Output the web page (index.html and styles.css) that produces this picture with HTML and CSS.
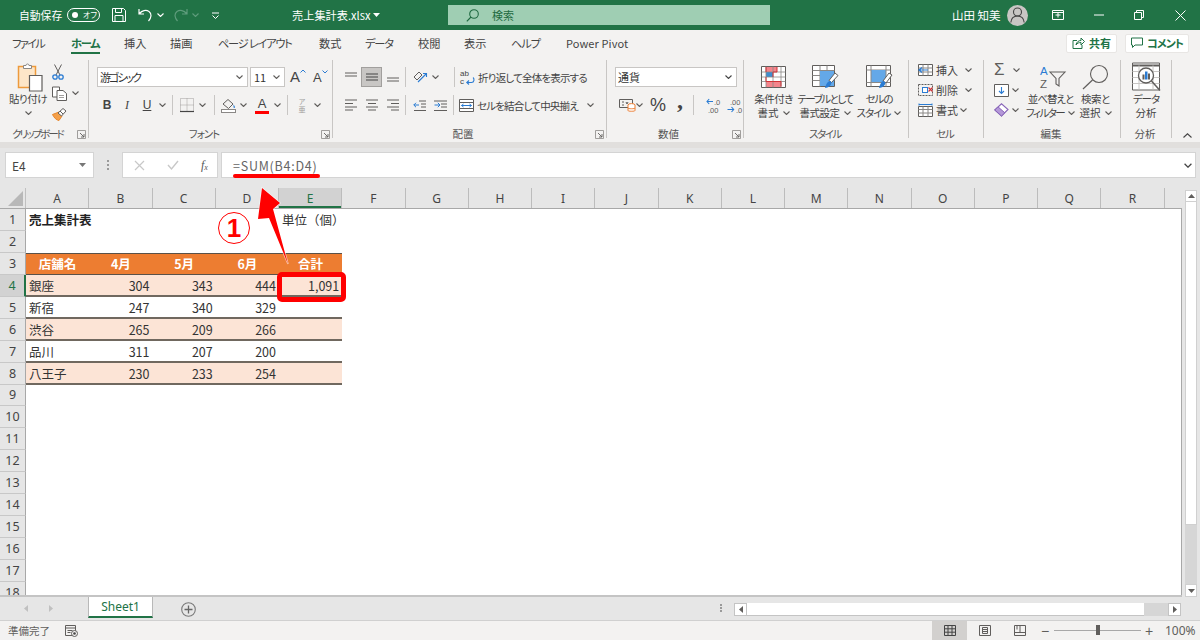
FILE: index.html
```html
<!DOCTYPE html>
<html lang="ja">
<head>
<meta charset="utf-8">
<title>売上集計表.xlsx</title>
<link rel="stylesheet" href="styles.css">
</head>
<body>
<svg class="defs" width="0" height="0">
  <symbol id="chev" viewBox="0 0 7 4"><path d="M.5.5 3.5 3.5 6.5.5" fill="none" stroke="currentColor" stroke-width="1.1"/></symbol>
  <symbol id="launch" viewBox="0 0 9 9"><path d="M.5 8.5V.5h8v8z" fill="none" stroke="#8a8886" stroke-width=".8"/><path d="M3 3l4 4M7 4v3H4" fill="none" stroke="#605e5c" stroke-width=".9"/></symbol>
</svg>
<div class="app">
  <header class="titlebar">
    <div class="tb-left">
      <span class="autosave">自動保存</span>
      <span class="toggle"><i class="dot"></i><b>オフ</b></span>
      <svg class="qat-save" width="14" height="14" viewBox="0 0 14 14"><path d="M.5.5h11l2 2v11H.5z M3.500.5v4h6v-4M3 13.500v-6h8v6" fill="none" stroke="#fff"/></svg>
      <svg class="qat-undo" width="15" height="14" viewBox="0 0 15 14"><path d="M1 1v5h5M1.500 5.500C4 2.500 8 1.500 11 3.500c3 2.200 2.500 6-.5 9.500" fill="none" stroke="#fff" stroke-width="1.200"/></svg>
      <svg class="chev chev-w qat-c1"><use href="#chev"/></svg>
      <svg class="qat-redo" width="15" height="14" viewBox="0 0 15 14"><path d="M14 1v5H9M13.500 5.500C11 2.500 7 1.500 4 3.500c-3 2.200-2.500 6 .5 9.500" fill="none" stroke="#5f9c7c" stroke-width="1.200"/></svg>
      <svg class="chev chev-dim qat-c2"><use href="#chev"/></svg>
      <svg class="qat-more" width="7" height="7" viewBox="0 0 7 7"><path d="M0 1h7M.5 3.500 3.500 6.500 6.500 3.500" fill="none" stroke="#fff"/></svg>
      <span class="doc-name">売上集計表.xlsx</span>
      <svg class="doc-caret" width="7" height="4" viewBox="0 0 7 4"><path d="M0 0h7L3.500 4z" fill="#fff"/></svg>
    </div>
    <div class="search">
      <svg width="13" height="13" viewBox="0 0 13 13"><circle cx="8" cy="5" r="4.300" fill="none" stroke="#1f6a41" stroke-width="1.100"/><path d="M5 8 .8 12.300" stroke="#1f6a41" stroke-width="1.100"/></svg>
      <span>検索</span>
    </div>
    <div class="tb-right">
      <span class="user">山田 知美</span>
      <span class="avatar"><svg width="15" height="16" viewBox="0 0 15 16"><circle cx="7.500" cy="5" r="4" fill="none" stroke="#444" stroke-width="1.100"/><path d="M.8 15.500c.4-4 3-6.500 6.700-6.500s6.300 2.500 6.700 6.500" fill="none" stroke="#444" stroke-width="1.100"/></svg></span>
      <svg class="win w-disp" width="12" height="10" viewBox="0 0 12 10"><path d="M.5.500h11v9H.5zM.5 2.500h11M3.500 5h5M6 2.500V7.500" fill="none" stroke="#fff"/></svg>
      <svg class="win w-min" width="10" height="2" viewBox="0 0 10 2"><path d="M0 1h10" stroke="#fff"/></svg>
      <svg class="win w-max" width="10" height="10" viewBox="0 0 10 10"><path d="M.5 2.500h7v7h-7zM2.500 2.500v-2h7v7h-2" fill="none" stroke="#fff"/></svg>
      <svg class="win w-close" width="11" height="11" viewBox="0 0 11 11"><path d="M.5.500l10 10M10.500.500l-10 10" stroke="#fff"/></svg>
    </div>
  </header>

  <nav class="tabs">
    <span class="tab t-file">ファイル</span>
    <span class="tab t-home active">ホーム</span>
    <span class="tab t-ins">挿入</span>
    <span class="tab t-draw">描画</span>
    <span class="tab t-page">ページ レイアウト</span>
    <span class="tab t-form">数式</span>
    <span class="tab t-data">データ</span>
    <span class="tab t-rev">校閲</span>
    <span class="tab t-view">表示</span>
    <span class="tab t-help">ヘルプ</span>
    <span class="tab t-pp">Power Pivot</span>
    <span class="tab-actions">
      <span class="pill pill-share"><svg width="13" height="12" viewBox="0 0 13 12"><path d="M5 3.500H1v8h9V8M4 8c.5-3 2.500-4.500 5-4.500V1l3.500 3.500L9 8V5.500C7 5.500 5 6 4 8z" fill="none" stroke="#217346"/></svg>共有</span>
      <span class="pill pill-comment"><svg width="12" height="12" viewBox="0 0 12 12"><path d="M.5 1h11v7H4L1.500 10.500V8h-1z" fill="none" stroke="#217346"/></svg><span class="k1">コメント</span></span>
    </span>
  </nav>

  <section class="ribbon">
    <div class="group g-clip">
      <div class="gbody clip-body">
        <div class="big paste">
          <svg class="big-ico" width="26" height="30" viewBox="0 0 26 30"><path d="M1.500 4.500h17v21h-17z" fill="#fde6c8" stroke="#ed9a3c" stroke-width="1.500"/><path d="M6.500 6.500v-3h2.500a1.500 1.500 0 0 1 3 0h2.500v3z" fill="#fff" stroke="#8a8886"/><path d="M12.500 13.500h12.500v15.500H12.500z" fill="#fff" stroke="#605e5c" stroke-width="1.200"/></svg>
          <span class="blabel k05">貼り付け</span>
          <svg class="chev chev-d"><use href="#chev"/></svg>
        </div>
        <div class="clip-tools">
          <div class="r clip-r"><svg width="12" height="16" viewBox="0 0 12 16"><path d="M2.500 .5 8 11M9.500 .5 4 11" stroke="#605e5c" fill="none"/><circle cx="3" cy="13" r="2.200" fill="none" stroke="#2b7cd3" stroke-width="1.300"/><circle cx="9" cy="13" r="2.200" fill="none" stroke="#2b7cd3" stroke-width="1.300"/></svg></div>
          <div class="r clip-r"><svg width="16" height="15" viewBox="0 0 16 15"><path d="M.5 1h7v10h-7z" fill="#fff" stroke="#605e5c"/><path d="M5 4.500h6l3.500 3v7H5z" fill="#fff" stroke="#605e5c"/><path d="M7 9.500h5M7 11.500h5" stroke="#a19f9d"/></svg><svg class="chev chev-d copy-c"><use href="#chev"/></svg></div>
          <div class="r clip-r"><svg width="15" height="14" viewBox="0 0 15 14"><path d="M.5 7.500 7 5l3 4-3 4.500C4 13 2 10.500.5 7.500z" fill="#f4a04a" stroke="#e8862a"/><path d="M6 6 11 1.500l3 2.500-4.500 5z" fill="#fff" stroke="#605e5c"/><path d="M8 4l3 3" stroke="#605e5c"/></svg></div>
        </div>
      </div>
      <div class="glabel"><span class="k2">クリップボード</span><svg class="launcher"><use href="#launch"/></svg></div>
    </div>

    <div class="group g-font">
      <div class="gbody stack">
        <div class="r">
          <span class="select sel-font"><span class="k2">游ゴシック</span><svg class="chev chev-d"><use href="#chev"/></svg></span>
          <span class="select sel-size"><span>11</span><svg class="chev chev-d"><use href="#chev"/></svg></span>
          <span class="grow-a">A<svg width="6" height="4" viewBox="0 0 6 4"><path d="M.5 3.500 3 1l2.500 2.500" fill="none" stroke="#2b7cd3"/></svg></span>
          <span class="shrink-a">A<svg width="6" height="4" viewBox="0 0 6 4"><path d="M.5.500 3 3 5.500.500" fill="none" stroke="#2b7cd3"/></svg></span>
        </div>
        <div class="r">
          <span class="s20 t-b">B</span><span class="s20 t-i">I</span><span class="s20 t-u">U</span><span class="s10 cc"><svg class="chev chev-d"><use href="#chev"/></svg></span>
          <i class="sep sep-a"></i>
          <span class="s20"><svg width="14" height="14" viewBox="0 0 14 14"><path d="M.5.500h13v13H.5z" fill="none" stroke="#a19f9d" stroke-dasharray="1 1"/><path d="M7 .5v13M.5 7h13" stroke="#a19f9d" stroke-dasharray="1 1"/><path d="M0 13.500h14" stroke="#444" stroke-width="1.200"/></svg></span><span class="s10 cc"><svg class="chev chev-d"><use href="#chev"/></svg></span>
          <i class="sep sep-b"></i>
          <span class="s20"><svg width="15" height="15" viewBox="0 0 15 15"><path d="M2 6 7 1.500 12 6 7.500 10.500z" fill="none" stroke="#605e5c"/><path d="M12.500 6.500s1.500 1.800 1.500 2.800-1.500 1-1.500 0z" fill="#2b7cd3"/><rect x=".5" y="11.500" width="14" height="3" fill="#fff" stroke="#8a8886"/></svg></span><span class="s10 cc"><svg class="chev chev-d"><use href="#chev"/></svg></span>
          <span class="s20 t-color">A</span><span class="s10 cc"><svg class="chev chev-d"><use href="#chev"/></svg></span>
          <i class="sep sep-a"></i>
          <span class="s20 t-ph"><b>ア</b><b>亜</b></span><span class="s10 cc"><svg class="chev chev-d"><use href="#chev"/></svg></span>
        </div>
      </div>
      <div class="glabel"><span class="k1">フォント</span><svg class="launcher"><use href="#launch"/></svg></div>
    </div>

    <div class="group g-align">
      <div class="gbody stack">
        <div class="r">
          <span class="s21"><svg width="12" height="12" viewBox="0 0 12 12"><path d="M0 2h12M0 5h12" stroke="#605e5c"/></svg></span>
          <span class="s21 on"><svg width="12" height="12" viewBox="0 0 12 12"><path d="M0 3h12M0 6h12M0 9h12" stroke="#444"/></svg></span>
          <span class="s21"><svg width="12" height="12" viewBox="0 0 12 12"><path d="M0 7h12M0 10h12" stroke="#605e5c"/></svg></span>
          <i class="sep sep-c"></i>
          <span class="s20"><svg width="15" height="13" viewBox="0 0 15 13"><path d="M1 6l5-5 3 3-5 5z" fill="none" stroke="#605e5c"/><path d="M5 11 13 3M10 2.500h3.500V6" fill="none" stroke="#2b7cd3" stroke-width="1.100"/></svg></span>
          <span class="s10 cc"><svg class="chev chev-d"><use href="#chev"/></svg></span>
          <i class="sep sep-d"></i>
          <svg class="wide-ico" width="15" height="17" viewBox="0 0 15 17"><text x="0" y="7" class="ico-t">ab</text><text x="0" y="15" class="ico-t">c</text><path d="M13 8.500c1.500 1 1.500 5-1.500 5H7M9 11.500l-2.200 2 2.200 2" fill="none" stroke="#2b7cd3" stroke-width="1.100"/></svg>
          <span class="rt">折り返して全体を表示する</span>
        </div>
        <div class="r">
          <span class="s21"><svg width="12" height="12" viewBox="0 0 12 12"><path d="M0 1h12M0 4.500h8M0 8h12M0 11h8" stroke="#605e5c"/></svg></span>
          <span class="s21"><svg width="12" height="12" viewBox="0 0 12 12"><path d="M0 1h12M2 4.500h8M0 8h12M2 11h8" stroke="#605e5c"/></svg></span>
          <span class="s21"><svg width="12" height="12" viewBox="0 0 12 12"><path d="M0 1h12M4 4.500h8M0 8h12M4 11h8" stroke="#605e5c"/></svg></span>
          <i class="sep sep-c"></i>
          <span class="s20 ind"><svg width="13" height="11" viewBox="0 0 13 11"><path d="M6 1h7M8 4h5M8 7h5M1 10.500h12" stroke="#605e5c" fill="none"/><path d="M6 5H.8M3 2.800.8 5 3 7.200" stroke="#2b7cd3" fill="none"/></svg></span>
          <span class="s20 ind2"><svg width="13" height="11" viewBox="0 0 13 11"><path d="M0 1h13M7 4h6M7 7h6M0 10.500h13" stroke="#605e5c" fill="none"/><path d="M.5 5h5.500M3.800 2.800 6 5 3.800 7.200" stroke="#2b7cd3" fill="none"/></svg></span>
          <i class="sep sep-e"></i>
          <svg class="wide-ico" width="15" height="13" viewBox="0 0 15 13"><path d="M.5.500h14v12H.5z" fill="#fff" stroke="#605e5c"/><path d="M.5 3.500h14M.5 9.500h14" stroke="#605e5c"/><path d="M2.500 6.500h10M4.500 5 2.500 6.500 4.500 8M10.500 5l2 1.500L10.500 8" fill="none" stroke="#2b7cd3"/></svg>
          <span class="rt merge-t">セルを結合して中央揃え</span>
          <svg class="chev chev-d merge-c"><use href="#chev"/></svg>
        </div>
      </div>
      <div class="glabel"><span>配置</span><svg class="launcher"><use href="#launch"/></svg></div>
    </div>

    <div class="group g-num">
      <div class="gbody stack">
        <div class="r"><span class="select sel-num"><span>通貨</span><svg class="chev chev-k"><use href="#chev"/></svg></span></div>
        <div class="r">
          <span class="s20 num-cur"><svg width="17" height="14" viewBox="0 0 17 14"><path d="M.5 1.500h13v8H.5z" fill="none" stroke="#605e5c"/><path d="M3 4h2M3 7h2M7 4l1 2 1-2" fill="none" stroke="#605e5c"/><ellipse cx="12.500" cy="7" rx="3.500" ry="1.400" fill="#fff" stroke="#ed7d31"/><path d="M9 7v5.500c0 1 7 1 7 0V7M9 10c0 1 7 1 7 0" fill="#fff" stroke="#ed7d31"/></svg></span><span class="s10 cc num-c"><svg class="chev chev-d"><use href="#chev"/></svg></span>
          <span class="s20 t-pct">%</span>
          <span class="s20 t-comma">,</span>
          <i class="sep sep-f"></i>
          <span class="s21"><svg width="16" height="15" viewBox="0 0 16 15"><path d="M7 3.500H1M3.200 1 1 3.500 3.200 6" fill="none" stroke="#2b7cd3" stroke-width="1.100"/><text x="8" y="6.500" class="ico-n">.0</text><text x="2" y="15" class="ico-n">.00</text></svg></span>
          <span class="s21"><svg width="16" height="15" viewBox="0 0 16 15"><text x="3" y="6.500" class="ico-n">.00</text><path d="M.5 11.500h6M4.500 9l2.200 2.500L4.500 14" fill="none" stroke="#2b7cd3" stroke-width="1.100"/><text x="9" y="15" class="ico-n">.0</text></svg></span>
        </div>
      </div>
      <div class="glabel"><span>数値</span><svg class="launcher"><use href="#launch"/></svg></div>
    </div>

    <div class="group g-style">
      <div class="gbody row-body">
        <div class="big st1">
          <svg class="big-ico" width="25" height="22" viewBox="0 0 25 22"><path d="M.5.500h24v21H.5z" fill="#fff" stroke="#605e5c"/><rect x="5" y="1" width="11" height="5" fill="#f4858c"/><rect x="5" y="6" width="7" height="5" fill="#3e8ed0"/><rect x="5" y="15" width="15" height="6" fill="#f4858c"/><path d="M5 .5v21M12 .5v21M20 .5v21M.5 6h24M.5 11h24M.5 15.500h24" stroke="#8a8886" fill="none" stroke-width=".8"/><path d="M5 1v5M16 1v5h-4v5M5 11v4.500h15v5" stroke="#d13438" fill="none"/></svg>
          <span class="blabel k05">条件付き</span>
          <span class="blabel">書式<svg class="chev chev-d inl"><use href="#chev"/></svg></span>
        </div>
        <div class="big st2">
          <svg class="big-ico" width="27" height="24" viewBox="0 0 27 24"><path d="M.5.500h22v21H.5z" fill="#fff" stroke="#605e5c"/><path d="M.5 5.500h22M.5 10.500h22M.5 15.500h22M8 .5v21M15 .5v21" stroke="#8a8886" fill="none"/><rect x="8" y="6" width="14" height="15" fill="#64a8e8"/><path d="M17 15.500 23 8 26 10.500 19.500 17.500z" fill="#fff" stroke="#605e5c"/><path d="M13 23c1-3 2-7 5.500-7l1 1.500c-.5 3.500-3 5-6.500 5.500z" fill="#2b7cd3"/></svg>
          <span class="blabel k15">テーブルとして</span>
          <span class="blabel k05">書式設定<svg class="chev chev-d inl"><use href="#chev"/></svg></span>
        </div>
        <div class="big st3">
          <svg class="big-ico" width="27" height="24" viewBox="0 0 27 24"><path d="M.5.500h24v21H.5z" fill="#fff" stroke="#605e5c"/><path d="M.5 5h24M.5 17.500h24" stroke="#8a8886" fill="none"/><rect x="5" y="5" width="15" height="12" fill="#64a8e8"/><path d="M5 .5v21M20 .5v21" stroke="#8a8886" fill="none"/><path d="M17 16 23 8 26 10 20 18z" fill="#fff" stroke="#605e5c"/><path d="M13 23c1-3 2-7 4.500-7l2 1.500c-.5 3.500-3 5-6.500 5.500z" fill="#2b7cd3"/></svg>
          <span class="blabel k1">セルの</span>
          <span class="blabel k1">スタイル<svg class="chev chev-d inl"><use href="#chev"/></svg></span>
        </div>
      </div>
      <div class="glabel"><span class="k15">スタイル</span></div>
    </div>

    <div class="group g-cells">
      <div class="gbody cells-body">
        <div class="r cr"><svg width="15" height="12" viewBox="0 0 15 12"><path d="M.5.500h14v11H.5z" fill="#fff" stroke="#605e5c"/><path d="M5 .5v11M10 .5v11" stroke="#8a8886"/><path d="M.5 4h14M.5 8h14" stroke="#8a8886"/><path d="M1 6h9M4 3.500 1 6l3 2.500" fill="none" stroke="#2b7cd3" stroke-width="1.200"/></svg><span class="ct">挿入</span><svg class="chev chev-d ccv"><use href="#chev"/></svg></div>
        <div class="r cr"><svg width="15" height="12" viewBox="0 0 15 12"><path d="M.5.500h14v11H.5z" fill="none" stroke="#605e5c" stroke-dasharray="2 1"/><rect x="4.500" y="3.500" width="5" height="5" fill="#fff" stroke="#2b7cd3"/><path d="M10.500 3.500l4 4M14.500 3.500l-4 4" stroke="#d13438" stroke-width="1.100"/></svg><span class="ct">削除</span><svg class="chev chev-d ccv"><use href="#chev"/></svg></div>
        <div class="r cr"><svg width="15" height="14" viewBox="0 0 15 14"><path d="M.5 3.500h14v10H.5z" fill="#fff" stroke="#605e5c"/><path d="M.5 6.500h14M.5 10h14M5 3.500v10M10 3.500v10" stroke="#8a8886"/><path d="M1 1.500h13M1 .5v2M14 .5v2" stroke="#2b7cd3"/></svg><span class="ct">書式</span><svg class="chev chev-d ccv2"><use href="#chev"/></svg></div>
      </div>
      <div class="glabel"><span class="k1">セル</span></div>
    </div>

    <div class="group g-edit">
      <div class="gbody row-body">
        <div class="edit-tools">
          <div class="r er"><span class="t-sigma">Σ</span><svg class="chev chev-d ev"><use href="#chev"/></svg></div>
          <div class="r er"><svg width="15" height="13" viewBox="0 0 15 13"><path d="M.5.500h14v12H.5z" fill="#fff" stroke="#605e5c"/><path d="M7.500 3v6.500M5 7l2.500 2.500L10 7" fill="none" stroke="#2b7cd3" stroke-width="1.100"/></svg><svg class="chev chev-d ev2"><use href="#chev"/></svg></div>
          <div class="r er"><svg width="15" height="14" viewBox="0 0 15 14"><path d="M.8 7 7.500.8 14 6.500 7.500 13z" fill="#fff" stroke="#8764b8" stroke-width="1.100"/><path d="M4 3.800 10.800 9.800 7.500 13 .8 7z" fill="#b498d8" stroke="#8764b8"/></svg><svg class="chev chev-d ev2"><use href="#chev"/></svg></div>
        </div>
        <div class="big ed1">
          <svg class="big-ico" width="28" height="26" viewBox="0 0 28 26"><text x="3" y="10.500" class="ico-az ico-blue">A</text><text x="3" y="24" class="ico-az">Z</text><path d="M13 8h15l-6 6.500v7.500l-3-2v-5.500z" fill="none" stroke="#605e5c" stroke-width="1.100"/></svg>
          <span class="blabel k1">並べ替えと</span>
          <span class="blabel k15">フィルター<svg class="chev chev-d inl"><use href="#chev"/></svg></span>
        </div>
        <div class="big ed2">
          <svg class="big-ico" width="27" height="26" viewBox="0 0 27 26"><circle cx="17" cy="10" r="8.500" fill="none" stroke="#605e5c" stroke-width="1.100"/><path d="M10.500 16 1 25" stroke="#605e5c" stroke-width="1.200"/></svg>
          <span class="blabel k05">検索と</span>
          <span class="blabel">選択<svg class="chev chev-d inl"><use href="#chev"/></svg></span>
        </div>
      </div>
      <div class="glabel"><span>編集</span></div>
    </div>

    <div class="group g-anl">
      <div class="gbody row-body">
        <div class="big an1">
          <svg class="big-ico" width="29" height="29" viewBox="0 0 29 29"><path d="M.5.500h27v27H.5z" fill="#fff" stroke="#605e5c"/><path d="M.5 3h27" stroke="#605e5c" stroke-width="2"/><path d="M7 3v24M21 3v24M.5 9h27M.5 15h27M.5 21h27" stroke="#c8c6c4"/><circle cx="14" cy="13" r="7.500" fill="#fff" stroke="#605e5c" stroke-width="1.300"/><rect x="10.500" y="12" width="2" height="5" fill="#605e5c"/><rect x="13" y="9" width="2.500" height="8" fill="#2b7cd3"/><rect x="16" y="11" width="2" height="6" fill="#605e5c"/><path d="M19.500 18.500 28 28" stroke="#605e5c" stroke-width="1.500"/></svg>
          <span class="blabel k1">データ</span>
          <span class="blabel">分析</span>
        </div>
      </div>
      <div class="glabel"><span>分析</span></div>
    </div>

    <svg class="collapse" width="9" height="5" viewBox="0 0 9 5"><path d="M.5 4.500 4.500.8l4 3.700" fill="none" stroke="#444" stroke-width="1.100"/></svg>
  </section>

  <section class="fbar">
    <div class="namebox"><span>E4</span><svg width="7" height="4" viewBox="0 0 7 4"><path d="M0 0h7L3.500 4z" fill="#777"/></svg></div>
    <div class="fdots"><i></i><i></i><i></i></div>
    <div class="fbtns">
      <svg width="11" height="11" viewBox="0 0 11 11"><path d="M1 1l9 9M10 1l-9 9" stroke="#c8c8c8" stroke-width="1.200"/></svg>
      <svg width="12" height="10" viewBox="0 0 12 10"><path d="M1 5l3.500 4L11 1" fill="none" stroke="#c8c8c8" stroke-width="1.400"/></svg>
      <span class="fx">f<sub>x</sub></span>
    </div>
    <div class="formula"><span>=SUM(B4:D4)</span><svg class="chev chev-k"><use href="#chev"/></svg></div>
  </section>

  <main class="work">
    <div class="sheet">
      <div class="colhead">
        <div class="corner"><svg width="15" height="15" viewBox="0 0 15 15"><path d="M15 0v15H0z" fill="#b8b8b8"/></svg></div>
        <div class="ch">A</div><div class="ch">B</div><div class="ch">C</div><div class="ch">D</div><div class="ch cur">E</div><div class="ch">F</div><div class="ch">G</div><div class="ch">H</div><div class="ch">I</div><div class="ch">J</div><div class="ch">K</div><div class="ch">L</div><div class="ch">M</div><div class="ch">N</div><div class="ch">O</div><div class="ch">P</div><div class="ch">Q</div><div class="ch">R</div>
      </div>
      <div class="rows">
        <div class="row"><div class="rh">1</div><div class="c title">売上集計表</div><div class="c"></div><div class="c"></div><div class="c"></div><div class="c unit">単位（個）</div></div>
        <div class="row"><div class="rh">2</div></div>
        <div class="row head"><div class="rh">3</div><div class="c">店舗名</div><div class="c">4月</div><div class="c">5月</div><div class="c">6月</div><div class="c">合計</div></div>
        <div class="row band sel"><div class="rh cur">4</div><div class="c">銀座</div><div class="c n">304</div><div class="c n">343</div><div class="c n">444</div><div class="c n">1,091</div></div>
        <div class="row line"><div class="rh">5</div><div class="c">新宿</div><div class="c n">247</div><div class="c n">340</div><div class="c n">329</div><div class="c"></div></div>
        <div class="row band"><div class="rh">6</div><div class="c">渋谷</div><div class="c n">265</div><div class="c n">209</div><div class="c n">266</div><div class="c"></div></div>
        <div class="row line"><div class="rh">7</div><div class="c">品川</div><div class="c n">311</div><div class="c n">207</div><div class="c n">200</div><div class="c"></div></div>
        <div class="row band"><div class="rh">8</div><div class="c">八王子</div><div class="c n">230</div><div class="c n">233</div><div class="c n">254</div><div class="c"></div></div>
        <div class="row"><div class="rh">9</div></div>
        <div class="row"><div class="rh">10</div></div>
        <div class="row"><div class="rh">11</div></div>
        <div class="row"><div class="rh">12</div></div>
        <div class="row"><div class="rh">13</div></div>
        <div class="row"><div class="rh">14</div></div>
        <div class="row"><div class="rh">15</div></div>
        <div class="row"><div class="rh">16</div></div>
        <div class="row"><div class="rh">17</div></div>
        <div class="row"><div class="rh">18</div></div>
      </div>
    </div>
    <aside class="vscroll">
      <span class="sbtn"><svg width="7" height="4" viewBox="0 0 7 4"><path d="M3.500 0 7 4H0z" fill="#605e5c"/></svg></span>
      <div class="vtrack"><span class="vthumb"></span></div>
      <span class="sbtn sbtn-end"><svg width="7" height="4" viewBox="0 0 7 4"><path d="M0 0h7L3.500 4z" fill="#605e5c"/></svg></span>
    </aside>
  </main>

  <section class="sheetbar">
    <div class="nav"><svg width="4" height="7" viewBox="0 0 4 7"><path d="M4 0v7L0 3.500z" fill="#c0c0c0"/></svg><svg width="4" height="7" viewBox="0 0 4 7"><path d="M0 0v7l4-3.500z" fill="#c0c0c0"/></svg></div>
    <div class="stab">Sheet1</div>
    <svg class="addsheet" width="15" height="15" viewBox="0 0 15 15"><circle cx="7.500" cy="7.500" r="6.800" fill="none" stroke="#7a7a7a" stroke-width="1.100"/><path d="M7.500 3.500v8M3.500 7.500h8" stroke="#666" stroke-width="1.300"/></svg>
    <div class="splitter"><i></i><i></i><i></i></div>
    <div class="hscroll">
      <span class="hbtn"><svg width="4" height="7" viewBox="0 0 4 7"><path d="M4 0v7L0 3.500z" fill="#605e5c"/></svg></span>
      <span class="hthumb"></span>
      <span class="hbtn"><svg width="4" height="7" viewBox="0 0 4 7"><path d="M0 0v7l4-3.500z" fill="#605e5c"/></svg></span>
    </div>
  </section>

  <footer class="status">
    <span class="ready">準備完了</span>
    <svg class="macro" width="13" height="12" viewBox="0 0 13 12"><path d="M.5.500h10v10H.5zM.5 3h10M2.500 5.500h5M2.500 7.500h3" fill="none" stroke="#605e5c"/><circle cx="9.500" cy="8.500" r="3" fill="#f3f2f1" stroke="#605e5c"/><circle cx="9.500" cy="8.500" r="1.300" fill="#444"/></svg>
    <div class="views">
      <span class="view on"><svg width="12" height="11" viewBox="0 0 12 11"><path d="M.5.500h11v10H.5zM4 .5v10M8 .5v10M.5 3.800h11M.5 7.200h11" fill="none" stroke="#444"/></svg></span>
      <span class="view"><svg width="12" height="11" viewBox="0 0 12 11"><path d="M.5.500h11v10H.5zM3.500 2.500h5v6h-5zM3.500 4.500h5M3.500 6.500h5" fill="none" stroke="#605e5c"/></svg></span>
      <span class="view"><svg width="12" height="11" viewBox="0 0 12 11"><path d="M.5.500h11v10H.5zM.5 7.500h11M6 .5v7M3 .5v4" fill="none" stroke="#605e5c"/></svg></span>
    </div>
    <span class="zsign zminus">−</span>
    <span class="slider"><i></i></span>
    <span class="zsign zplus">+</span>
    <span class="zoompct">100%</span>
  </footer>

  <div class="callouts">
    <i class="formula-mark"></i>
    <svg class="arrow" width="60" height="90" viewBox="250 180 60 90"><path d="M262 188 280 203 273 209 288 264 269 218 258 219z" fill="#ff0000" stroke="#fff" stroke-opacity=".6" stroke-width="1.500" paint-order="stroke"/></svg>
    <span class="step">1</span>
    <i class="cell-mark"></i>
  </div>
</div>
</body>
</html>
```

FILE: styles.css
```css
* { box-sizing: border-box; }
html, body { margin: 0; height: 100%; }
body {
  font-family: "Noto Sans CJK JP", "Noto Sans", sans-serif;
  font-size: 11px;
  color: #444;
  background: #f3f2f1;
  overflow: hidden;
  font-feature-settings: "palt";
}
.defs { position: absolute; }
svg { display: block; flex: none; overflow: visible; }
.app { position: relative; width: 1200px; height: 640px; display: flex; flex-direction: column; overflow: hidden; }
.chev { width: 7px; height: 4px; flex: none; }
.chev-w { color: #fff; }
.chev-dim { color: #5f9c7c; }
.chev-d { color: #605e5c; }
.chev-k { color: #444; }
.k05 { letter-spacing: -.5px; }
.k1 { letter-spacing: -1px; }
.k15 { letter-spacing: -1.500px; }
.k2 { letter-spacing: -2px; }

/* title bar */
.titlebar { height: 30px; flex: none; background: #217346; color: #fff; display: grid; grid-template-columns: 448px 322px 1fr; align-items: center; }
.tb-left { display: flex; align-items: center; padding-left: 19px; font-size: 11.500px; white-space: nowrap; }
.autosave { width: 43px; font-size: 10.800px; }
.toggle { margin-left: 5px; width: 33px; height: 14px; border: 1px solid #fff; border-radius: 7px; display: flex; align-items: center; padding-left: 4px; }
.toggle .dot { width: 6px; height: 6px; border-radius: 50%; background: #fff; }
.toggle b { font-weight: 400; font-size: 8px; margin-left: 5px; line-height: 12px; }
.qat-save { margin-left: 12px; }
.qat-undo { margin-left: 12px; }
.qat-c1 { margin-left: 4px; }
.qat-redo { margin-left: 9px; }
.qat-c2 { margin-left: 4px; }
.qat-more { margin-left: 13px; }
.doc-name { margin-left: 73px; width: 78px; white-space: nowrap; font-size: 11.200px; }
.doc-caret { margin-left: 3px; }
.search { height: 20px; background: #9fceb3; display: flex; align-items: center; padding-left: 18px; color: #1f6a41; font-size: 11px; }
.search span { margin-left: 13px; }
.tb-right { display: flex; align-items: center; padding-left: 182px; font-size: 11.500px; }
.user { width: 46px; white-space: nowrap; }
.avatar { margin-left: 9px; width: 21px; height: 21px; border-radius: 50%; background: #c8c6c4; display: flex; align-items: center; justify-content: center; }
.w-disp { margin-left: 24px; }
.w-min { margin-left: 30px; }
.w-max { margin-left: 30px; }
.w-close { margin-left: 31px; }

/* tabs */
.tabs { height: 26px; flex: none; display: flex; align-items: center; padding-left: 12px; font-size: 11.200px; color: #444; }
.tab { position: relative; white-space: nowrap; line-height: 18px; flex: none; }
.tab.active { font-weight: 700; color: #217346; }
.tab.active::after { content: ""; position: absolute; left: 0; right: 0; bottom: -2px; height: 2px; background: #217346; }
.t-file { width: 33px; letter-spacing: -1.700px; }
.t-home { width: 29px; margin-left: 26px; letter-spacing: -1.200px; }
.t-ins { width: 22px; margin-left: 24px; }
.t-draw { width: 22px; margin-left: 24px; }
.t-page { width: 75px; margin-left: 26px; letter-spacing: -1.200px; }
.t-form { width: 23px; margin-left: 26px; }
.t-data { width: 29px; margin-left: 23px; letter-spacing: -1.100px; }
.t-rev { width: 22px; margin-left: 24px; }
.t-view { width: 23px; margin-left: 24px; }
.t-help { width: 28px; margin-left: 24px; letter-spacing: -1.100px; }
.t-pp { width: 66px; margin-left: 27px; font-size: 11px; letter-spacing: .1px; }
.tab-actions { margin-left: auto; display: flex; gap: 8px; padding-right: 11px; }
.pill { height: 19px; background: #fff; border: 1px solid #e8e6e4; border-radius: 2px; display: flex; align-items: center; justify-content: center; gap: 4px; color: #217346; font-weight: 700; font-size: 11px; }
.pill-share { width: 51px; }
.pill-comment { width: 64px; }

/* ribbon */
.ribbon { position: relative; height: 92px; flex: none; display: flex; padding-top: 4px; border-bottom: 6px solid #e1dfdd; }
.group { height: 78px; border-right: 1px solid #c8c6c4; display: flex; flex-direction: column; flex: none; }
.gbody { flex: 1; min-height: 0; }
.glabel { height: 14px; line-height: 14px; margin-bottom: -3px; display: flex; align-items: center; padding-right: 2px; font-size: 10.500px; color: #555; }
.glabel span { flex: 1; text-align: center; white-space: nowrap; }
.launcher { width: 9px; height: 9px; margin-left: 2px; }
.g-clip { width: 89px; }
.g-font { width: 244px; }
.g-align { width: 274px; }
.g-num { width: 137px; }
.g-style { width: 165px; }
.g-cells { width: 75px; }
.g-edit { width: 137px; }
.g-anl { width: 51px; }
.r { display: flex; align-items: center; height: 20px; }
.stack { display: flex; flex-direction: column; gap: 8px; padding-top: 7px; }
.g-font .stack { padding-left: 8px; }
.g-align .stack { padding-left: 7px; }
.g-num .stack { padding-left: 8px; }
.select { height: 20px; background: #fff; border: 1px solid #c8c6c4; display: flex; align-items: center; justify-content: space-between; padding: 0 4px 0 2px; font-size: 11px; color: #333; white-space: nowrap; }
.sel-font { width: 151px; }
.sel-size { width: 35px; margin-left: 2px; padding-left: 3px; }
.sel-num { width: 122px; font-size: 11px; }
.grow-a, .shrink-a { display: flex; align-items: flex-start; font-family: "Liberation Sans", sans-serif; line-height: 16px; color: #444; }
.grow-a { font-size: 15px; margin-left: 5px; width: 22px; }
.shrink-a { font-size: 13px; margin-left: 1px; padding-top: 1px; }
.s20, .s21, .s10 { display: flex; align-items: center; justify-content: center; flex: none; height: 20px; }
.s20 { width: 20px; }
.s21 { width: 21px; }
.s10 { width: 10px; }
.s21.on { background: #c8c6c4; border: 1px solid #a19f9d; }
.t-b { font: 700 12px "Liberation Sans", sans-serif; color: #444; }
.t-i { font: italic 12px "Liberation Serif", serif; color: #444; }
.t-u { font: 12px "Liberation Sans", sans-serif; text-decoration: underline; color: #444; }
.t-color { font: 13px/14px "Liberation Sans", sans-serif; color: #444; flex-direction: column; margin-left: 4px; }
.t-color::after { content: ""; width: 14px; height: 3px; background: #f00; }
.t-ph { flex-direction: column; color: #a19f9d; font-size: 7px; line-height: 8px; }
.t-ph b { font-weight: 400; }
.sep { display: block; width: 1px; height: 20px; background: #c8c6c4; flex: none; }
.sep-a { margin: 0 4px 0 5px; }
.sep-b { margin: 0 3px 0 7px; }
.sep-c { margin: 0 4px 0 2px; }
.sep-d { margin: 0 5px 0 14px; }
.sep-e { margin: 0 5px 0 3px; }
.sep-f { margin: 0 9px 0 3px; }
.ind { margin-left: -1px; }
.ind2 { margin-left: 1px; }
.wide-ico { width: 15px; }
.rt { margin-left: 3px; font-size: 10.500px; letter-spacing: -.8px; white-space: nowrap; color: #444; }
.merge-t { width: 102px; }
.merge-c { margin-left: 8px; }
.ico-t { font: 8px "Liberation Sans", sans-serif; fill: #444; }
.ico-n { font: 7.500px "Liberation Sans", sans-serif; fill: #605e5c; }
.ico-az { font: 11.500px "Liberation Sans", sans-serif; fill: #605e5c; }
.ico-blue { fill: #2b7cd3; }
.num-cur { margin-left: 2px; }
.num-c { margin-left: -3px; margin-right: 4px; }
.t-pct { font: 18px "Liberation Sans", sans-serif; color: #444; }
.t-comma { font: 700 24px/14px "Liberation Serif", serif; color: #444; padding-bottom: 10px; margin-left: 2px; }
.clip-body { display: flex; padding-top: 2px; padding-left: 8px; }
.row-body { display: flex; padding-top: 2px; }
.big { display: flex; flex-direction: column; align-items: center; flex: none; }
.big-ico { height: 30px; }
.blabel { height: 14px; line-height: 14px; font-size: 10.500px; white-space: nowrap; display: flex; align-items: center; color: #444; }
.paste { width: 40px; }
.paste .chev { margin-top: 5px; }
.paste .big-ico { margin-left: 4px; }
.clip-tools { display: flex; flex-direction: column; gap: 1px; margin-left: 2px; }
.clip-r { width: 32px; height: 20px; padding-left: 2px; justify-content: flex-start; }
.copy-c { margin-left: 4px; }
.inl { margin-left: 4px; }
.g-style .row-body { padding-left: 6px; }
.st1 { width: 47px; }
.st2 { width: 56px; }
.st3 { width: 52px; }
.cells-body { padding-left: 9px; }
.cr { height: 20px; }
.ct { margin-left: 3px; font-size: 11px; width: 24px; white-space: nowrap; }
.ccv { margin-left: 5px; }
.ccv2 { margin-left: 0; }
.g-edit .row-body { padding-left: 10px; padding-top: 0; }
.edit-tools { width: 34px; display: flex; flex-direction: column; }
.er { height: 20px; }
.t-sigma { font: 17px "Liberation Sans", sans-serif; color: #605e5c; width: 15px; }
.ev { margin-left: 4px; }
.ev2 { margin-left: 3px; }
.ed1 { width: 45px; padding-top: 2px; }
.ed2 { width: 45px; padding-top: 2px; }
.g-anl .row-body { justify-content: center; }
.collapse { position: absolute; right: 8px; top: 77px; }

/* formula bar */
.fbar { height: 38px; flex: none; background: #e6e6e6; display: flex; align-items: flex-start; padding: 4px 4px 0 5px; }
.namebox { width: 89px; height: 26px; background: #fff; border: 1px solid #d4d4d4; display: flex; align-items: center; justify-content: space-between; padding: 0 7px 0 6px; font-size: 12px; color: #444; }
.fdots { width: 28px; height: 26px; display: flex; flex-direction: column; align-items: center; justify-content: center; gap: 2px; }
.fdots i { width: 2px; height: 2px; background: #9a9a9a; }
.fbtns { width: 96px; height: 26px; background: #fff; border: 1px solid #d4d4d4; display: flex; align-items: center; padding-left: 11px; gap: 22px; }
.fx { font: italic 12px/1 "Liberation Serif", serif; color: #555; }
.fx sub { font-size: 8px; vertical-align: -1px; }
.formula { margin-left: 3px; flex: 1; height: 26px; background: #fff; border: 1px solid #d4d4d4; display: flex; align-items: center; justify-content: space-between; padding: 0 3px 0 11px; font-size: 12.500px; letter-spacing: .75px; color: #666; }
.formula .chev { width: 8px; height: 5px; }

/* sheet */
.work { flex: 1; min-height: 0; display: flex; background: #e6e6e6; }
.sheet { width: 1182px; flex: none; display: flex; flex-direction: column; border-bottom: 2px solid #c4c4c4; overflow: hidden; }
.colhead { height: 23px; flex: none; padding-top: 2px; display: grid; grid-template-columns: 26px repeat(18, 63.250px); background: #e6e6e6; border-bottom: 1px solid #a8a8a8; font: 12px "Noto Sans", sans-serif; }
.corner { display: flex; align-items: flex-end; justify-content: flex-end; padding: 0 2px 2px 0; border-right: 1px solid #c0c0c0; }
.ch { display: flex; align-items: center; justify-content: center; border-right: 1px solid #bcbcbc; color: #444; }
.ch.cur { background: #d2d2d2; color: #217346; box-shadow: inset 0 -2px 0 #217346; }
.rows { flex: 1; min-height: 0; background: #fff; border-right: 1px solid #a8a8a8; overflow: hidden; }
.row { height: 21.940px; display: grid; grid-template-columns: 26px repeat(5, 63.250px); font-size: 12.500px; color: #333; }
.rh { background: #e6e6e6; border-right: 1px solid #a8a8a8; border-bottom: 1px solid #c8c8c8; display: flex; align-items: center; justify-content: center; font: 12.500px "Noto Sans", sans-serif; color: #444; }
.rh.cur { background: #d2d2d2; color: #217346; border-right: 2px solid #217346; }
.c { display: flex; align-items: center; padding: 0 3px; white-space: nowrap; min-width: 0; }
.c.n { justify-content: flex-end; }
.title { font-weight: 700; color: #222; }
.unit { font-feature-settings: normal; color: #333; }
.head .c { background: #ed7d31; color: #fff; font-weight: 700; justify-content: center; box-shadow: inset 0 1px 0 #5a5148, inset 0 -1px 0 #5a5148; }
.band .c { background: #fce4d6; }
.band .c, .line .c { box-shadow: inset 0 -2px 0 #70685f; }

.vscroll { flex: 1; display: flex; flex-direction: column; align-items: flex-start; padding: 4px 0 0 3px; }
.sbtn { width: 12px; height: 12px; background: #fff; border: 1px solid #d0d0d0; display: flex; align-items: center; justify-content: center; flex: none; }
.sbtn-end { height: 13px; }
.vtrack { width: 12px; flex: 1; min-height: 0; background: #d6d6d6; }
.vthumb { display: block; width: 12px; height: 323px; background: #fff; border: 1px solid #d0d0d0; border-top: 0; }

/* sheet bar */
.sheetbar { height: 24px; flex: none; background: #e6e6e6; border-bottom: 1px solid #d0d0d0; display: flex; align-items: flex-start; }
.nav { width: 88px; height: 22px; display: flex; align-items: center; gap: 21px; padding-left: 24px; }
.stab { width: 65px; height: 21px; background: #fff; border: solid #b8b8b8; border-width: 0 1px; border-bottom: 2px solid #217346; color: #217346; display: flex; align-items: center; justify-content: center; font: 12px "Noto Sans", sans-serif; }
.addsheet { margin: 5px 0 0 28px; }
.splitter { margin: 7px 0 0 523px; width: 4px; display: flex; flex-direction: column; gap: 1px; align-items: center; }
.splitter i { width: 2px; height: 2px; background: #9a9a9a; }
.hscroll { margin: 6px 0 0 11px; display: flex; height: 13px; width: 447px; background: #d6d6d6; }
.hbtn { width: 13px; height: 13px; background: #fff; border: 1px solid #c4c4c4; display: flex; align-items: center; justify-content: center; flex: none; }
.hthumb { width: 397px; background: #fff; margin-right: auto; border-bottom: 1px solid #c4c4c4; }

/* status */
.status { height: 19px; flex: none; background: #f3f2f1; display: flex; align-items: center; padding-left: 8px; font-size: 10.500px; color: #605e5c; white-space: nowrap; }
.ready { width: 41px; }
.macro { margin-left: 16px; }
.views { margin-left: 854px; display: flex; }
.view { width: 35px; height: 19px; display: flex; align-items: center; justify-content: center; }
.view.on { background: #d2d0ce; }
.zsign { font: 14px/1 "Liberation Sans", sans-serif; color: #605e5c; width: 10px; text-align: center; }
.zminus { margin-left: 3px; }
.zplus { margin-left: 3px; }
.slider { position: relative; margin-left: 4px; width: 87px; height: 1px; background: #a8a8a8; }
.slider i { position: absolute; left: 42px; top: -5px; width: 4px; height: 10px; background: #605e5c; }
.zoompct { margin-left: 11px; font: 12px "Noto Sans", sans-serif; color: #605e5c; }

/* annotations lying over the window */
.callouts { position: absolute; inset: 0; pointer-events: none; }
.formula-mark { position: absolute; left: 233px; top: 174px; width: 87px; height: 4px; background: #f00; border-radius: 2px; }
.arrow { position: absolute; left: 250px; top: 180px; }
.step { position: absolute; left: 218px; top: 212px; width: 32px; height: 32px; border-radius: 50%; background: #fff; border: 1px solid #f00; color: #f00; font: 700 26px/30px "Liberation Sans", sans-serif; text-align: center; box-shadow: 0 0 0 1px #fff; }
.cell-mark { position: absolute; left: 277px; top: 272px; width: 69px; height: 30px; border: 5px solid #f00; border-radius: 5px; }
```
